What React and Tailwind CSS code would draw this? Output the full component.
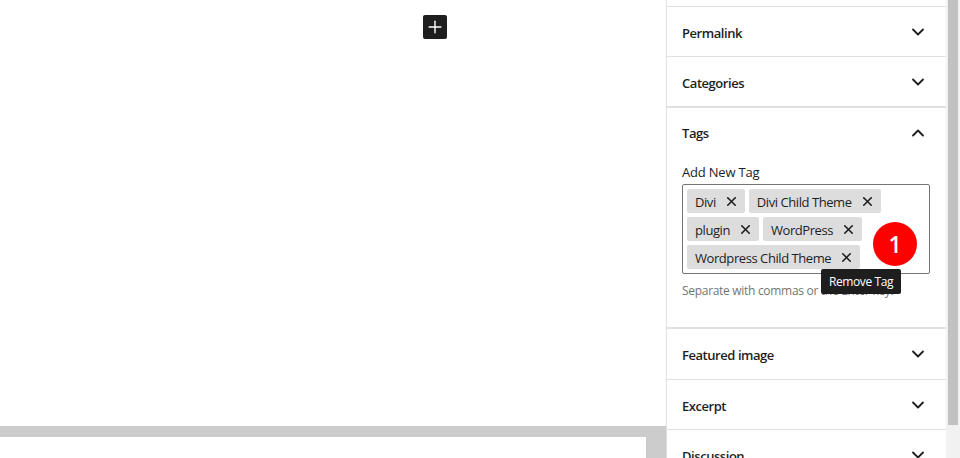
import React from "react";
import { ChevronDown, ChevronUp, Plus, X } from "lucide-react";

function PanelRow({ title, className = "h-[50px] border-b" }) {
  return (
    <div className={`flex items-center justify-between pl-[15px] pr-[18px] border-[#e0e0e0] ${className}`}>
      <span className="pt-1 text-[13px] font-semibold tracking-[-0.45px] text-[#1e1e1e]">{title}</span>
      <ChevronDown size={20} strokeWidth={2.2} className="text-[#1e1e1e]" />
    </div>
  );
}

function Tag({ name }) {
  return (
    <span className="flex h-6 items-center gap-2 rounded-[2px] bg-[#ddd] pl-2 pr-[6px] text-[13px] tracking-[-0.43px] text-[#1e1e1e]">
      <span className="pt-[3px]">{name}</span>
      <X size={15} strokeWidth={2.5} />
    </span>
  );
}

export default function App() {
  return (
    <div className="flex h-[458px] w-[960px] overflow-hidden bg-white font-['Open_Sans','Noto_Sans',sans-serif]">
      <main className="flex w-[666px] flex-col">
        <div className="flex h-[426px] justify-center pl-[204px] pt-[15px]">
          <button className="flex h-6 w-6 items-center justify-center rounded-[2px] bg-[#1e1e1e] text-white">
            <Plus size={20} strokeWidth={1.7} />
          </button>
        </div>
        <div className="flex-1 bg-[#ccc] pr-5 pt-[11px]">
          <div className="h-full bg-white" />
        </div>
      </main>

      <aside className="w-[280px] border-l border-[#e0e0e0]">
        <div className="h-[7px] border-b border-[#e0e0e0]" />
        <PanelRow title="Permalink" />
        <PanelRow title="Categories" className="h-[51px] border-b-2" />
        <div className="border-b-2 border-[#e0e0e0] pl-[15px] pr-4">
          <div className="flex h-[49px] items-center justify-between pr-0.5">
            <span className="pt-[2px] text-[13px] font-semibold tracking-[-0.45px] text-[#1e1e1e]">Tags</span>
            <ChevronUp size={20} strokeWidth={2.2} className="text-[#1e1e1e]" />
          </div>
          <label className="mt-[6px] block text-[13px] leading-[18px] tracking-[-0.2px] text-[#1e1e1e]">Add New Tag</label>
          <div className="relative mt-[3px] flex h-[90px] w-[248px] flex-wrap content-start gap-1 rounded-[2px] border border-[#757575] p-1">
            <Tag name="Divi" />
            <Tag name="Divi Child Theme" />
            <Tag name="plugin" />
            <Tag name="WordPress" />
            <Tag name="Wordpress Child Theme" />
            <span className="absolute left-[190px] top-[37px] flex h-11 w-11 items-center justify-center rounded-full bg-[#f00] text-[23px] font-semibold text-white">
              1
            </span>
            <span className="absolute left-[138px] top-[84px] flex h-[25px] w-20 items-center justify-center rounded-[2px] bg-[#1e1e1e] text-xs tracking-[-0.4px] text-white">
              Remove Tag
            </span>
          </div>
          <p className="mt-2 pb-[27px] text-xs leading-[18px] tracking-[-0.3px] text-[#757575]">Separate with commas or the Enter key.</p>
        </div>
        <PanelRow title="Featured image" className="h-[51px] border-b" />
        <PanelRow title="Excerpt" />
        <PanelRow title="Discussion" />
      </aside>

      <div className="flex flex-1 flex-col bg-[#f1f1f1] pl-0.5 pr-0.5">
        <div className="h-[425px] bg-[#c1c1c1]" />
      </div>
    </div>
  );
}
